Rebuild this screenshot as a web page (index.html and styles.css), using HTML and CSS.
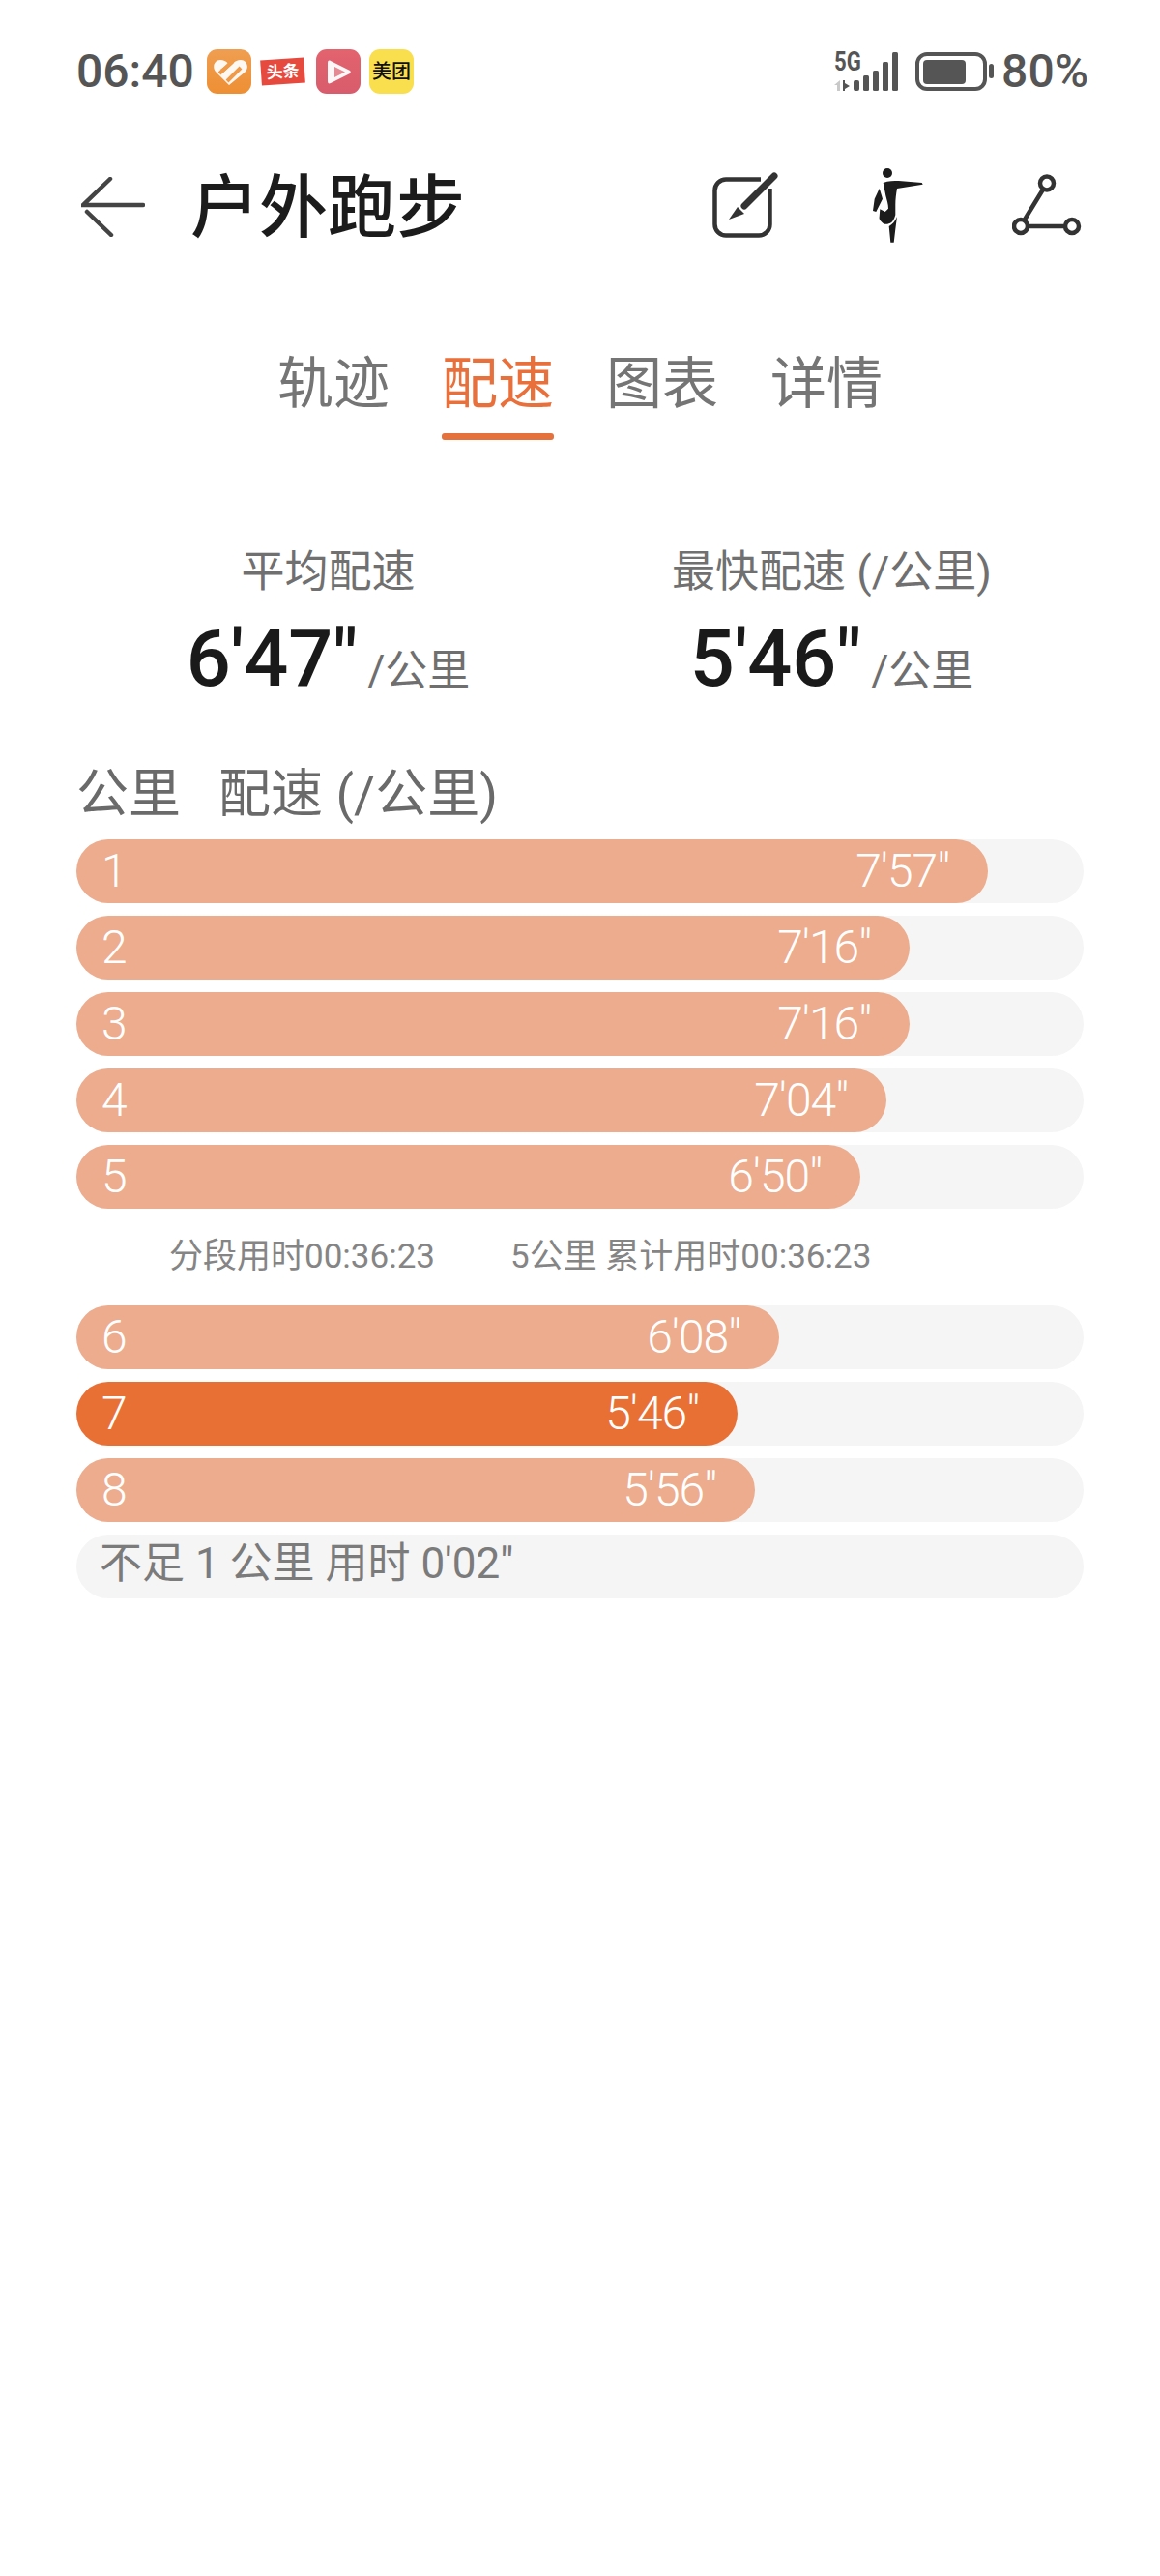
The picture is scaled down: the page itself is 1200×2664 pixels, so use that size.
FILE: index.html
```html
<!DOCTYPE html>
<html lang="zh">
<head>
<meta charset="utf-8">
<title>户外跑步</title>
<link rel="stylesheet" href="styles.css">
</head>
<body>
<div class="page">
  <div class="status">
    <div class="status-left">
      <span class="time">06:40</span>
      <svg class="app" viewBox="0 0 46 46"><defs><linearGradient id="o" x1="0" y1="0" x2="0" y2="1"><stop offset="0" stop-color="#ef9e52"/><stop offset="1" stop-color="#ee8f33"/></linearGradient></defs><rect width="46" height="46" rx="11" fill="url(#o)"/><path d="M23 37 9 23c-4-5-1-12 5-12 3 0 6 1 8 4l-8 6 3 3 10-9c2-3 5-4 8-4 6 0 9 7 5 12L23 37Z" fill="#fff" opacity=".93"/><path d="M13 25 27 12M21 33 35 19" stroke="#ef9a48" stroke-width="4" fill="none"/></svg>
      <span class="toutiao"><span class="toutiao-text">头条</span></span>
      <svg class="app" viewBox="0 0 46 46"><defs><linearGradient id="r" x1="0" y1="0" x2="0" y2="1"><stop offset="0" stop-color="#e3636e"/><stop offset="1" stop-color="#d85c6c"/></linearGradient></defs><rect width="46" height="46" rx="11" fill="url(#r)"/><path d="M15 12 35 22c1 1 1 2 0 3L15 35c-2 1-3 0-3-2V14c0-2 1-3 3-2Z" fill="#fff" opacity=".95"/><path d="M19 18 30 23.500 19 29Z" fill="#e58a93"/></svg>
      <span class="meituan">美团</span>
    </div>
    <div class="status-right">
      <div class="signal">
        <span class="fiveg">5G</span>
        <svg class="signal-bars" viewBox="0 0 66 40"><path d="M0 34 6 29V40H3V34Z" fill="#c9c9c9"/><path d="M9 29h2v3l5 3-5 3v2H9Z" fill="#555"/><rect x="20" y="29" width="6" height="11" rx="2" fill="#555"/><rect x="30" y="24" width="6" height="16" rx="1.500" fill="#555"/><rect x="40" y="19" width="6" height="21" rx="1.500" fill="#555"/><rect x="50" y="10" width="6" height="30" rx="1.500" fill="#555"/><rect x="60" y="0" width="6" height="40" rx="1.500" fill="#555"/></svg>
      </div>
      <svg class="battery" viewBox="0 0 82 40"><rect x="2" y="2" width="70" height="36" rx="10" fill="none" stroke="#555" stroke-width="4"/><rect x="8" y="8" width="44" height="25" rx="4" fill="#555"/><rect x="76" y="12" width="5" height="15" rx="2.500" fill="#555"/></svg>
      <span class="pct">80%</span>
    </div>
  </div>

  <div class="header">
    <div class="header-left">
      <svg class="back" viewBox="0 0 66 62" fill="none" stroke="#444" stroke-width="4.500" stroke-linecap="round"><path d="M30 2 2 29H64"/><path d="M6 36 31 60"/></svg>
      <h1 class="title">户外跑步</h1>
    </div>
    <div class="header-icons">
      <svg class="ic-edit" viewBox="0 0 68 68" fill="none"><path d="M50 7.500H14A11.500 11.500 0 0 0 2.500 19V54A11.500 11.500 0 0 0 14 65.500H48A11.500 11.500 0 0 0 59.500 54V17" stroke="#333" stroke-width="4.500"/><path d="M64 4 33 35" stroke="#333" stroke-width="7" stroke-linecap="round"/><path d="M26 36 33 43 17 49Z" fill="#333"/></svg>
      <svg class="ic-run" viewBox="0 0 52 77" fill="#1c1c1c"><circle cx="15" cy="5" r="5"/><path d="M10.700 15C16 13 22 13 26.700 13L50.700 15 51.700 16.700 25 21C24 27 23.300 32 23.300 38V48.300C22 53 20 56 18 56.700 15 58 12 58 11.700 57.700 8 55 6 53 6.700 50L7.300 42.300 12.700 45 16 41.700C16 37 14.500 33 13.300 28.300Z"/><path d="M6.700 21C8 25 9 28 10 31.700L3.300 45 0 44 1.700 31.700Z"/><path d="M25 50 23.300 63 21.700 76.700H18.300L16.700 60C20 58 23 55 25 50Z"/></svg>
      <svg class="ic-route" viewBox="0 0 72 64" fill="none" stroke="#333" stroke-width="4.500"><circle cx="36" cy="9.500" r="7"/><circle cx="9" cy="54" r="7"/><circle cx="62" cy="54" r="7"/><path d="M32 16 13 47M16 54H55"/></svg>
    </div>
  </div>

  <div class="tabs">
    <div class="tab">轨迹</div>
    <div class="tab tab-active">配速</div>
    <div class="tab">图表</div>
    <div class="tab">详情</div>
  </div>

  <div class="summary">
    <div class="sum-col">
      <div class="sum-label">平均配速</div>
      <div class="sum-value"><span class="sum-num">6'47"</span><span class="sum-unit">/公里</span></div>
    </div>
    <div class="sum-col">
      <div class="sum-label">最快配速 (/公里)</div>
      <div class="sum-value"><span class="sum-num">5'46"</span><span class="sum-unit">/公里</span></div>
    </div>
  </div>

  <div class="table-head"><span>公里</span><span>配速 (/公里)</span></div>

  <div class="bars">
    <div class="track"><div class="fill" style="width:943px"><span class="km">1</span><span class="pace">7'57"</span></div></div>
    <div class="track"><div class="fill" style="width:862px"><span class="km">2</span><span class="pace">7'16"</span></div></div>
    <div class="track"><div class="fill" style="width:862px"><span class="km">3</span><span class="pace">7'16"</span></div></div>
    <div class="track"><div class="fill" style="width:838px"><span class="km">4</span><span class="pace">7'04"</span></div></div>
    <div class="track"><div class="fill" style="width:811px"><span class="km">5</span><span class="pace">6'50"</span></div></div>
  </div>

  <div class="split"><span>分段用时00:36:23</span><span>5公里 累计用时00:36:23</span></div>

  <div class="bars">
    <div class="track"><div class="fill" style="width:727px"><span class="km">6</span><span class="pace">6'08"</span></div></div>
    <div class="track"><div class="fill fill-best" style="width:684px"><span class="km">7</span><span class="pace">5'46"</span></div></div>
    <div class="track"><div class="fill" style="width:702px"><span class="km">8</span><span class="pace">5'56"</span></div></div>
    <div class="track track-note">不足 1 公里 用时 0'02"</div>
  </div>
</div>
</body>
</html>
```

FILE: styles.css
```css
* { box-sizing: border-box; }
html, body { margin: 0; padding: 0; background: #fff; }
body { font-family: Roboto, "Noto Sans CJK SC", sans-serif; }
.page { width: 1200px; min-height: 2664px; padding: 48px 79px 0; }

.status { height: 52px; display: flex; justify-content: space-between; align-items: center; }
.status-left { display: flex; align-items: center; }
.time { font-size: 48px; font-weight: 500; color: #555; line-height: 52px; width: 135px; }
.app { width: 46px; height: 46px; display: block; }
.toutiao { width: 45px; height: 26px; margin: 0 12px 0 10px; background: #e64a3f; transform: rotate(-4deg); display: flex; align-items: center; justify-content: center; }
.toutiao-text { color: #fff; font-size: 17px; font-weight: 700; line-height: 26px; }
.meituan { width: 46px; height: 46px; margin-left: 9px; border-radius: 11px; background: #f9df4d; color: #111; font-size: 20px; font-weight: 500; line-height: 46px; text-align: center; white-space: nowrap; }
.status-right { display: flex; align-items: center; margin-right: -5px; }
.signal { width: 66px; height: 40px; position: relative; }
.fiveg { position: absolute; left: 0; top: -3px; font-size: 27px; font-weight: 700; color: #555; line-height: 26px; transform: scaleX(.82); transform-origin: left center; }
.signal-bars { width: 66px; height: 40px; display: block; }
.battery { width: 82px; height: 40px; margin-left: 18px; display: block; }
.pct { font-size: 48px; font-weight: 500; color: #555; line-height: 52px; margin-left: 7px; }

.header { height: 90px; margin-top: 67px; display: flex; justify-content: space-between; align-items: center; }
.header-left { display: flex; align-items: center; }
.back { width: 66px; height: 62px; margin: 3px 0 0 5px; display: block; }
.title { margin: 6px 0 0 47px; font-size: 71px; font-weight: 500; color: #1c1c1c; line-height: 90px; }
.header-icons { display: flex; align-items: center; margin-right: 2px; }
.ic-edit { width: 68px; height: 68px; display: block; }
.ic-run { width: 52px; height: 77px; margin-left: 98px; display: block; }
.ic-route { width: 72px; height: 64px; margin-left: 92px; display: block; }

.tabs { margin-top: 100px; display: flex; justify-content: center; gap: 54px; }
.tab { width: 116px; height: 98px; font-size: 58px; line-height: 80px; color: #757575; text-align: center; }
.tab-active { color: #e9703a; position: relative; }
.tab-active::after { content: ""; position: absolute; left: 0; right: 0; top: 91px; height: 7px; border-radius: 3px; background: #e5713d; }

.summary { margin-top: 107px; display: grid; grid-template-columns: 1fr 1fr; text-align: center; }
.sum-label { font-size: 45px; line-height: 60px; color: #707070; }
.sum-value { margin-top: 15px; line-height: 90px; height: 90px; white-space: nowrap; }
.sum-num { font-size: 81px; font-weight: 500; color: #1a1a1a; }
.sum-unit { font-size: 44px; color: #6f6f6f; margin-left: 10px; }

.table-head { margin-top: 60px; height: 67px; display: flex; gap: 39px; font-size: 54px; line-height: 70px; color: #6a6a6a; }

.bars { display: flex; flex-direction: column; gap: 13px; margin-top: 14px; }
.track { height: 66px; width: 1042px; border-radius: 33px; background: #f5f5f5; }
.fill { height: 66px; border-radius: 33px; background: #ecac8d; color: #fff; display: flex; justify-content: space-between; align-items: center; padding: 0 40px 0 26px; }
.fill-best { background: #e97035; }
.km, .pace { font-size: 48px; font-weight: 300; line-height: 66px; letter-spacing: -1px; }
.track-note { padding-left: 24px; font-size: 44px; line-height: 60px; color: #7b7b7b; white-space: nowrap; }

.split { height: 50px; margin-top: 25px; margin-bottom: 25px; padding-left: 96px; display: flex; gap: 78px; font-size: 35px; line-height: 50px; color: #858585; }
```
